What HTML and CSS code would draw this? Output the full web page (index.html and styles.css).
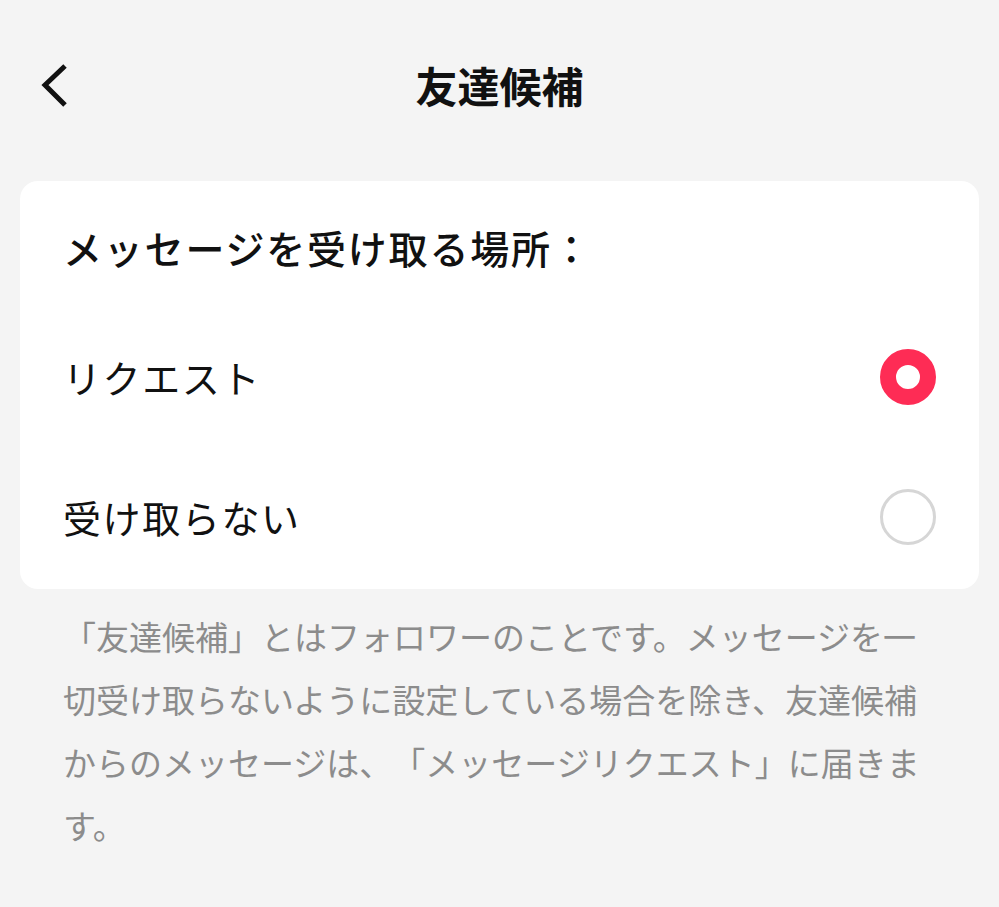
FILE: index.html
```html
<!DOCTYPE html>
<html lang="ja">
<head>
    <meta charset="UTF-8">
    <meta name="viewport" content="width=device-width, initial-scale=1.0">
    <title>友達候補</title>
    <link rel="stylesheet" href="styles.css">
</head>
<body>

    <header class="topbar">
        <button class="back" aria-label="戻る">
            <svg width="40" height="60" viewBox="0 0 40 60">
                <polyline points="25,11 5,30 25,50" fill="none" stroke="#111" stroke-width="5" stroke-linecap="butt" stroke-linejoin="miter"/>
            </svg>
        </button>
        <h1 class="title">友達候補</h1>
    </header>

    <section class="card">
        <h2 class="card-heading">メッセージを受け取る場所：</h2>

        <label class="option">
            <span class="option-label">リクエスト</span>
            <input type="radio" name="place" checked>
            <span class="radio"></span>
        </label>

        <label class="option">
            <span class="option-label">受け取らない</span>
            <input type="radio" name="place">
            <span class="radio"></span>
        </label>
    </section>

    <p class="note">「友達候補」とはフォロワーのことです。メッセージを一切受け取らないように設定している場合を除き、友達候補からのメッセージは、「メッセージリクエスト」に届きます。</p>

</body>
</html>
```

FILE: styles.css
```css
body {
    margin: 0;
    padding: 0 20px;
    background: #f4f4f4;
    color: #111;
    font-family: "Noto Sans CJK JP", "Noto Sans", sans-serif;
}

.topbar {
    position: relative;
    height: 170px;
    display: flex;
    align-items: center;
    justify-content: center;
}
.back {
    position: absolute;
    left: 20px;
    top: 55px;
    width: 40px;
    height: 60px;
    padding: 0;
    border: none;
    background: none;
}
.back svg {
    display: block;
}
.title {
    margin: 0;
    font-size: 42px;
    font-weight: 700;
    line-height: 60px;
}

.card {
    margin-top: 11px;
    background: #fff;
    border-radius: 18px;
    padding: 38px 43px 2px;
}
.card-heading {
    margin: 0 0 32px;
    font-size: 39px;
    font-weight: 500;
    line-height: 56px;
    letter-spacing: 1.8px;
    text-spacing-trim: space-all;
}

.option {
    height: 140px;
    display: flex;
    align-items: center;
    justify-content: space-between;
    cursor: pointer;
}
.option-label {
    font-size: 38px;
    line-height: 56px;
    letter-spacing: 1.6px;
}
.option input {
    display: none;
}
.radio {
    width: 50px;
    height: 50px;
    border: 3px solid #d6d6d6;
    border-radius: 50%;
}
.option input:checked + .radio {
    width: 24px;
    height: 24px;
    border: 16px solid #fe2c55;
    background: #fff;
}

.note {
    margin: 16px 0 0;
    padding: 0 52px 0 43px;
    font-size: 33px;
    line-height: 63px;
    color: #8c8c8c;
    text-spacing-trim: space-all;
}
```
